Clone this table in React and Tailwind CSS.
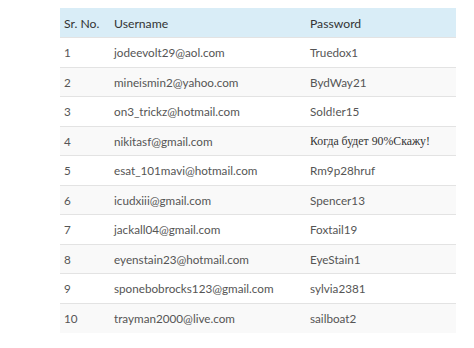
import React from "react";

const rows = [
  ["1", "jodeevolt29@aol.com", "Truedox1"],
  ["2", "mineismin2@yahoo.com", "BydWay21"],
  ["3", "on3_trickz@hotmail.com", "Sold!er15"],
  ["4", "nikitasf@gmail.com", "Когда будет 90%Скажу!"],
  ["5", "esat_101mavi@hotmail.com", "Rm9p28hruf"],
  ["6", "icudxiii@gmail.com", "Spencer13"],
  ["7", "jackall04@gmail.com", "Foxtail19"],
  ["8", "eyenstain23@hotmail.com", "EyeStain1"],
  ["9", "sponebobrocks123@gmail.com", "sylvia2381"],
  ["10", "trayman2000@live.com", "sailboat2"],
];

export default function App() {
  return (
    <div className="w-[474px] h-[348px] bg-white pt-[8px] pl-[60px] font-['Lato',sans-serif] text-[11.7px]">
      <table className="w-[396px] border-collapse">
        <thead>
          <tr className="bg-[#d9edf7] h-[29.5px] text-[#333] text-[12.2px]">
            <th className="text-left font-normal pl-[4px] pt-[3px] w-[54px]">Sr. No.</th>
            <th className="text-left font-normal pt-[3px] w-[196px]">Username</th>
            <th className="text-left font-normal pt-[3px]">Password</th>
          </tr>
        </thead>
        <tbody className="text-[#555]">
          {rows.map((r, i) => (
            <tr
              key={r[0]}
              className={`h-[29.5px] border-t border-[#e3e3e3] ${i % 2 === 1 ? "bg-[#f9f9f9]" : "bg-white"}`}
            >
              <td className="pl-[4px] pt-[2px]">{r[0]}</td>
              <td className="pt-[2px]">{r[1]}</td>
              <td className={i === 3 ? "pt-[2px] font-['Liberation_Serif',serif] text-[#333] text-[11.8px]" : "pt-[2px]"}>{r[2]}</td>
            </tr>
          ))}
        </tbody>
      </table>
    </div>
  );
}
